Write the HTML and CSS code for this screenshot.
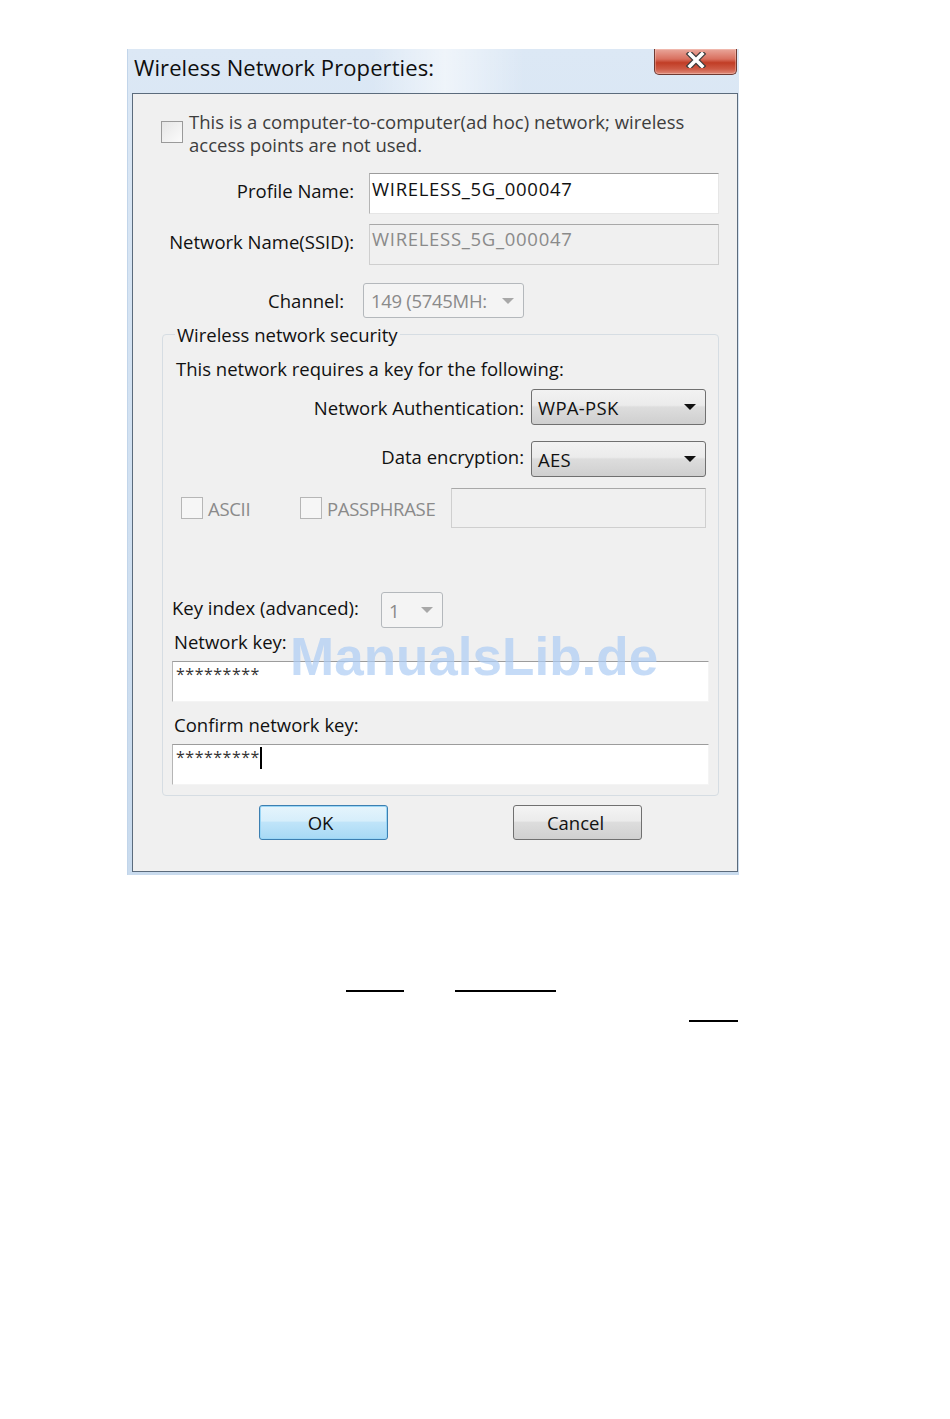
FILE: index.html
```html
<!DOCTYPE html>
<html>
<head>
<meta charset="utf-8">
<title>Wireless Network Properties</title>
<link rel="stylesheet" href="styles.css">
</head>
<body>
<div class="page">
  <div class="window">
    <div class="titlebar">
      <span class="title">Wireless Network Properties:</span>
      <div class="close">
        <svg width="22" height="16" viewBox="0 0 22 16">
          <path d="M5 2 L17 14 M17 2 L5 14" stroke="#3b3b3b" stroke-width="6" stroke-linecap="square" fill="none"/>
          <path d="M5 2 L17 14 M17 2 L5 14" stroke="#ffffff" stroke-width="3.6" stroke-linecap="square" fill="none"/>
        </svg>
      </div>
    </div>
    <div class="client">
      <div class="adhoc">
        <span class="chk"></span>
        <p class="adhoc-text">This is a computer-to-computer(ad hoc) network; wireless<br>access points are not used.</p>
      </div>

      <div class="row row-profile">
        <span class="lbl">Profile Name:</span>
        <div class="edit">WIRELESS_5G_000047</div>
      </div>
      <div class="row row-ssid">
        <span class="lbl">Network Name(SSID):</span>
        <div class="edit disabled">WIRELESS_5G_000047</div>
      </div>
      <div class="row row-channel">
        <span class="lbl">Channel:</span>
        <div class="combo disabled combo-channel"><span class="val">149 (5745MH:</span><span class="arrow"></span></div>
      </div>

      <fieldset class="group">
        <legend>Wireless network security</legend>
        <p class="req">This network requires a key for the following:</p>
        <div class="srow srow-auth">
          <span class="lbl">Network Authentication:</span>
          <div class="combo combo-wide"><span class="val">WPA-PSK</span><span class="arrow"></span></div>
        </div>
        <div class="srow srow-enc">
          <span class="lbl">Data encryption:</span>
          <div class="combo combo-wide"><span class="val">AES</span><span class="arrow"></span></div>
        </div>
        <div class="chkrow">
          <div class="chkitem item-ascii"><span class="chk small"></span><span class="dis">ASCII</span></div>
          <div class="chkitem item-pass"><span class="chk small"></span><span class="dis">PASSPHRASE</span></div>
          <div class="edit disabled edit-pass"></div>
        </div>
        <div class="keyrow">
          <span class="lbl">Key index (advanced):</span>
          <div class="combo disabled combo-key"><span class="val">1</span><span class="arrow"></span></div>
        </div>
        <p class="keylbl">Network key:</p>
        <div class="edit keyedit"><span class="stars">*********</span></div>
        <p class="keylbl confirm">Confirm network key:</p>
        <div class="edit keyedit"><span class="stars">*********</span><span class="caret"></span></div>
      </fieldset>

      <div class="buttons">
        <button class="btn ok">OK</button>
        <button class="btn cancel">Cancel</button>
      </div>

      <div class="watermark">ManualsLib.de</div>
    </div>
  </div>

  <div class="blanks">
    <div class="blank-row one">
      <span class="blank b1"></span>
      <span class="blank b2"></span>
    </div>
    <div class="blank-row two">
      <span class="blank b3"></span>
    </div>
  </div>
</div>
</body>
</html>
```

FILE: styles.css
```css
html, body {
  margin: 0;
  padding: 0;
  background: #ffffff;
}

body {
  font-family: "Open Sans", "Noto Sans", sans-serif;
  font-size: 18.5px;
  color: #111111;
}

.page {
  width: 950px;
  height: 1419px;
  padding-top: 49px;
  box-sizing: border-box;
}

.window {
  width: 612px;
  margin-left: 127px;
  box-sizing: border-box;
  padding: 0 1px 3px 4px;
  background: linear-gradient(180deg, #dce8f5 0%, #d3e2f2 40%, #c9dbee 100%);
  border-left: 1px solid #c2d5ea;
}

.titlebar {
  height: 44px;
  display: flex;
  justify-content: space-between;
  align-items: flex-start;
  margin-left: -4px;
  padding-left: 6px;
  background: linear-gradient(90deg, rgba(255,255,255,0) 40%, rgba(255,255,255,0.55) 52%, rgba(255,255,255,0) 65%);
}

.title {
  font-size: 22px;
  line-height: 36px;
  color: #0e0e0e;
  letter-spacing: 0.1px;
}

.close {
  width: 83px;
  height: 26px;
  box-sizing: border-box;
  margin-right: 1px;
  border: 1px solid #6e3a32;
  border-top: none;
  border-radius: 0 0 5px 5px;
  background: linear-gradient(180deg, #e9a79b 0%, #d9705f 40%, #c13d26 55%, #cd5a45 80%, #e08c7c 100%);
  display: flex;
  justify-content: center;
  align-items: center;
  padding-bottom: 4px;
  box-shadow: inset 0 0 0 1px rgba(255,220,210,0.35);
}

.client {
  position: relative;
  height: 779px;
  box-sizing: border-box;
  border: 1px solid #5b6b7c;
  background: #f0f0f0;
}

p { margin: 0; }

.chk {
  display: block;
  width: 22px;
  height: 22px;
  box-sizing: border-box;
  border: 1px solid #9a9a9a;
  background: linear-gradient(135deg, #e6e6e6, #fbfbfb);
  flex: none;
}

.chk.small {
  border-color: #b6b6b6;
  background: #f6f6f6;
}

.adhoc {
  display: flex;
  align-items: flex-start;
  padding: 16px 0 0 28px;
}

.adhoc .chk {
  margin-top: 11px;
}

.adhoc-text {
  margin-left: 6px;
  line-height: 23px;
  color: #3d3d3d;
}

.row {
  display: flex;
  align-items: flex-start;
}

.row .lbl {
  width: 221px;
  text-align: right;
  margin-right: 15px;
  line-height: 23px;
  margin-top: 6px;
}

.row-profile { margin-top: 17px; }
.row-ssid { margin-top: 10px; }

.edit {
  width: 350px;
  height: 41px;
  box-sizing: border-box;
  background: #ffffff;
  border: 1px solid #e6e6e6;
  border-top-color: #9c9c9c;
  border-left-color: #b5b5b5;
  padding: 3px 0 0 2px;
  line-height: 23px;
  color: #111111;
  letter-spacing: 0.7px;
}

.edit.disabled {
  background: #f0f0f0;
  border: 1px solid #cfcfcf;
  border-top-color: #a8a8a8;
  color: #8a8a8a;
}

.row-ssid .edit { padding-top: 2px; }

.row-channel {
  margin-top: 18px;
  align-items: center;
}

.row-channel .lbl {
  width: 211px;
  margin: 0 19px 0 0;
}

.combo {
  height: 36px;
  box-sizing: border-box;
  border: 1px solid #707070;
  border-radius: 3px;
  background: linear-gradient(180deg, #f2f2f2 0%, #ebebeb 45%, #dddddd 50%, #cfcfcf 100%);
  display: flex;
  align-items: center;
  justify-content: space-between;
  padding: 0 9px 0 5px;
  line-height: 23px;
  letter-spacing: -0.3px;
}

.combo .arrow {
  width: 0;
  height: 0;
  border-left: 6px solid transparent;
  border-right: 6px solid transparent;
  border-top: 6px solid #111111;
}

.combo.disabled {
  border-color: #b4b8bc;
  background: #f4f4f4;
  color: #8a8a8a;
}

.combo.disabled .arrow {
  border-top-color: #a8a8a8;
}

.combo-channel {
  width: 161px;
  height: 35px;
  padding-left: 7px;
}

.group {
  margin: 5px 0 0 29px;
  width: 557px;
  box-sizing: border-box;
  padding: 0 0 10px 0;
  border: 1px solid #d6dde3;
  border-radius: 4px;
}

.group legend {
  margin-left: 12px;
  padding: 0 2px;
  line-height: 23px;
}

.req {
  margin: 11px 0 0 13px;
  line-height: 23px;
}

.srow {
  display: flex;
  justify-content: flex-end;
  align-items: center;
  padding-right: 12px;
}

.srow .lbl {
  margin-right: 7px;
  line-height: 23px;
}

.srow-auth { margin-top: 9px; }
.srow-enc { margin-top: 16px; }
.srow-enc .lbl { margin-bottom: 6px; }

.combo-wide {
  width: 175px;
  padding-left: 6px;
}

.combo-wide .val {
  letter-spacing: 0.3px;
}

.chkrow {
  display: flex;
  align-items: center;
  margin-top: 11px;
  padding-left: 18px;
}

.chkitem {
  display: flex;
  align-items: center;
}

.item-ascii { width: 119px; }
.item-pass { width: 151px; }

.chkitem .chk {
  margin-right: 5px;
}

.dis {
  color: #8a8a8a;
  line-height: 23px;
  letter-spacing: -0.3px;
}

.edit-pass {
  width: 255px;
  height: 40px;
}

.keyrow {
  display: flex;
  align-items: center;
  margin-top: 64px;
  padding-left: 9px;
}

.keyrow .lbl {
  width: 209px;
  line-height: 23px;
  margin-bottom: 5px;
}

.combo-key {
  width: 62px;
  padding-left: 7px;
}

.keylbl {
  margin: 2px 0 0 11px;
  line-height: 23px;
}

.keylbl.confirm {
  margin-top: 11px;
}

.keyedit {
  width: 537px;
  margin: 8px 0 0 9px;
  display: flex;
  align-items: flex-start;
  padding: 2px 0 0 3px;
  border-right-color: #f4f4f4;
  border-bottom-color: #f4f4f4;
  letter-spacing: 0;
}

.stars {
  font-size: 16px;
  line-height: 20px;
  letter-spacing: 0.5px;
  color: #333333;
}

.caret {
  display: block;
  width: 2px;
  height: 22px;
  background: #000000;
  margin-left: 0;
}

.buttons {
  display: flex;
  margin: 9px 0 0 126px;
  gap: 125px;
}

.btn {
  width: 129px;
  height: 35px;
  box-sizing: border-box;
  border-radius: 3px;
  font-family: "Open Sans", "Noto Sans", sans-serif;
  font-size: 18.5px;
  color: #111111;
  padding: 0;
}

.btn.ok {
  border: 1px solid #3c7fb1;
  background: linear-gradient(180deg, #e5f4fc 0%, #d6eefb 45%, #bfe4f9 50%, #a7d9f5 100%);
  box-shadow: inset 0 0 0 1px #9ad6f6;
  padding-right: 6px;
}

.btn.cancel {
  border: 1px solid #707070;
  background: linear-gradient(180deg, #f4f4f4 0%, #ebebeb 45%, #dddddd 50%, #d0d0d0 100%);
  padding-right: 4px;
}

.watermark {
  position: absolute;
  left: 157px;
  top: 536px;
  font-family: "Liberation Sans", Arial, sans-serif;
  font-weight: bold;
  font-size: 53px;
  line-height: 53px;
  color: rgba(173, 204, 243, 0.7);
  white-space: nowrap;
  pointer-events: none;
}

.blanks {
  margin-top: 115px;
}

.blank-row {
  display: flex;
  height: 2px;
}

.blank {
  display: block;
  height: 2px;
  background: #000000;
}

.blank-row.one { margin-left: 346px; }
.b1 { width: 58px; }
.b2 { width: 101px; margin-left: 51px; }

.blank-row.two {
  margin-top: 28px;
  margin-left: 689px;
}
.b3 { width: 49px; }
```
